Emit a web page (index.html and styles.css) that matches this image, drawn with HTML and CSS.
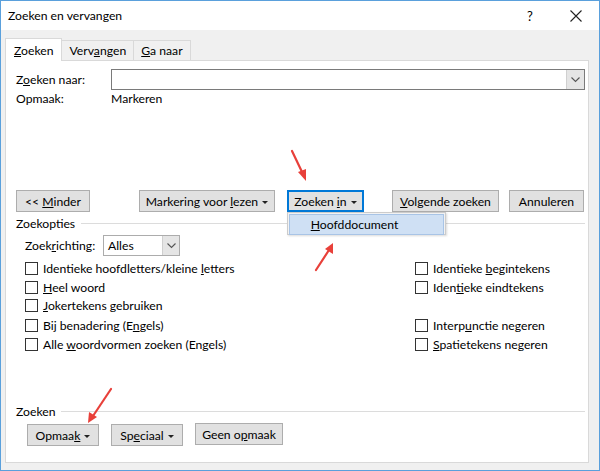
FILE: index.html
```html
<!DOCTYPE html>
<html lang="nl">
<head>
  <meta charset="UTF-8" />
  <title>Zoeken en vervangen</title>
  <link rel="stylesheet" href="styles.css">
</head>
<body>

  <div class="window">
    <div class="titlebar">
      <span class="title">Zoeken en vervangen</span>
      <span class="help">?</span>
      <span class="close">
        <svg width="12" height="12" viewBox="0 0 12 12"><path d="M0.5 0.5 L11.5 11.5 M11.5 0.5 L0.5 11.5" stroke="#222" stroke-width="1.1" fill="none"/></svg>
      </span>
    </div>

    <div class="client">
      <div class="tabs">
        <div class="tab active"><u>Z</u>oeken</div>
        <div class="tab">Verv<u>a</u>ngen</div>
        <div class="tab"><u>G</u>a naar</div>
      </div>

      <div class="panel">
        <div class="search-row">
          <span class="lbl">Z<u>o</u>eken naar:</span>
          <div class="combo">
            <div class="combo-btn">
              <svg width="9" height="6" viewBox="0 0 9 6"><path d="M0.5 0.5 L4.5 4.5 L8.5 0.5" stroke="#555" stroke-width="1.1" fill="none"/></svg>
            </div>
          </div>
        </div>
        <div class="format-row">
          <span class="lbl">Opmaak:</span>
          <span>Markeren</span>
        </div>

        <div class="actions">
          <button class="btn minder">&lt;&lt; <u>M</u>inder</button>
          <button class="btn reading">Markering voor <u>l</u>ezen <span class="caret"></span></button>
          <div class="menu-wrap">
            <button class="btn default">Zoeken <u>i</u>n <span class="caret"></span></button>
            <div class="menu"><div class="menu-item"><u>H</u>oofddocument</div></div>
          </div>
          <button class="btn next"><u>V</u>olgende zoeken</button>
          <button class="btn cancel">Annuleren</button>
        </div>

        <div class="group-title"><span>Zoekopties</span></div>

        <div class="direction-row">
          <span class="lbl">Zoek<u>r</u>ichting:</span>
          <div class="select">
            <span>Alles</span>
            <div class="select-btn">
              <svg width="9" height="6" viewBox="0 0 9 6"><path d="M0.5 0.5 L4.5 4.5 L8.5 0.5" stroke="#555" stroke-width="1.1" fill="none"/></svg>
            </div>
          </div>
        </div>

        <div class="options">
          <div class="col">
            <label class="check"><span class="box"></span><span>Identieke hoofdletters/kleine <u>l</u>etters</span></label>
            <label class="check"><span class="box"></span><span><u>H</u>eel woord</span></label>
            <label class="check"><span class="box"></span><span><u>J</u>okertekens gebruiken</span></label>
            <label class="check"><span class="box"></span><span>Bij benadering (E<u>n</u>gels)</span></label>
            <label class="check"><span class="box"></span><span>Alle <u>w</u>oordvormen zoeken (Engels)</span></label>
          </div>
          <div class="col right">
            <label class="check"><span class="box"></span><span>Identieke <u>b</u>egintekens</span></label>
            <label class="check"><span class="box"></span><span>Iden<u>t</u>ieke eindtekens</span></label>
            <label class="check blank"></label>
            <label class="check"><span class="box"></span><span>Interp<u>u</u>nctie negeren</span></label>
            <label class="check"><span class="box"></span><span><u>S</u>patietekens negeren</span></label>
          </div>
        </div>

        <div class="group-title bottom"><span>Zoeken</span></div>

        <div class="format-buttons">
          <button class="btn small">Opmaa<u>k</u> <span class="caret"></span></button>
          <button class="btn small">Sp<u>e</u>ciaal <span class="caret"></span></button>
          <button class="btn plain">Geen o<u>p</u>maak</button>
        </div>
      </div>
    </div>

    <!-- red annotation arrows -->
    <svg class="arrows" width="600" height="471" viewBox="0 0 600 471">
      <g stroke="#e8403a" stroke-width="2.2" fill="none" stroke-linecap="round">
        <path d="M292 151 L303 174"/>
        <path d="M316 270 L329 250"/>
        <path d="M111 389 L93 416"/>
      </g>
      <g fill="#e8403a">
        <path d="M306 181 L298 172 L306 169 Z"/>
        <path d="M333 243 L333 254 L325 249 Z"/>
        <path d="M88 423 L89 412 L97 417 Z"/>
      </g>
    </svg>
  </div>

</body>
</html>
```

FILE: styles.css
```css
body {
  margin: 0;
  padding: 0;
  font-family: "Segoe UI", Lato, "Noto Sans", sans-serif;
  font-size: 12.2px;
  color: #000;
}
u {
  text-decoration: underline;
  text-underline-offset: 1px;
}
.window {
  position: relative;
  width: 600px;
  height: 471px;
  box-sizing: border-box;
  border: 1px solid #5aa0dc;
  background: #f0f0f0;
  overflow: hidden;
}
.titlebar {
  height: 29px;
  background: #fff;
  display: flex;
  align-items: center;
  padding-left: 7px;
}
.title {
  flex: 1;
}
.help {
  width: 46px;
  text-align: center;
  font-size: 13px;
}
.close {
  width: 46px;
  display: flex;
  justify-content: center;
}
.client {
  padding: 8px 10px 0 4px;
}
.tabs {
  display: flex;
  height: 22px;
  align-items: flex-end;
  position: relative;
  z-index: 2;
}
.tab {
  height: 19px;
  line-height: 19px;
  padding: 0 7px;
  border: 1px solid #d9d9d9;
  border-bottom: none;
  margin-left: -1px;
  background: #f0f0f0;
}
.tab:first-child {
  margin-left: 0;
}
.tab.active {
  height: 22px;
  line-height: 23px;
  background: #fff;
  padding: 0 8px;
  margin-bottom: -1px;
}
.panel {
  background: #fff;
  border: 1px solid #d9d9d9;
  height: 401px;
  padding: 0 3px 0 10px;
  position: relative;
}
.search-row {
  display: flex;
  align-items: center;
  margin-top: 8px;
  height: 21px;
}
.search-row .lbl,
.format-row .lbl {
  width: 95px;
}
.combo {
  flex: 1;
  height: 19px;
  border: 1px solid #7a7a7a;
  display: flex;
  justify-content: flex-end;
}
.combo-btn {
  width: 17px;
  background: #e5e5e5;
  border-left: 1px solid #d0d0d0;
  display: flex;
  align-items: center;
  justify-content: center;
}
.format-row {
  display: flex;
  margin-top: 1px;
  height: 17px;
}
.actions {
  display: flex;
  margin-top: 82px;
  height: 22px;
  align-items: flex-start;
}
.btn {
  font-family: inherit;
  font-size: inherit;
  color: #000;
  background: #e1e1e1;
  border: 1px solid #adadad;
  height: 22px;
  padding: 0;
  margin: 0;
  white-space: nowrap;
}
.caret {
  display: inline-block;
  width: 0;
  height: 0;
  border-left: 3px solid transparent;
  border-right: 3px solid transparent;
  border-top: 3px solid #222;
  vertical-align: middle;
  margin-left: 1px;
}
.minder {
  width: 74px;
}
.reading {
  width: 136px;
  margin-left: 49px;
}
.menu-wrap {
  position: relative;
  margin-left: 12px;
}
.btn.default {
  width: 77px;
  border: 2px solid #0078d7;
}
.menu {
  position: absolute;
  top: 22px;
  left: 0;
  width: 159px;
  height: 23px;
  background: #f2f2f2;
  border: 1px solid #ccc;
  box-sizing: border-box;
  padding: 1px;
  box-shadow: 1px 1px 2px rgba(0, 0, 0, 0.15);
  z-index: 3;
}
.menu-item {
  height: 19px;
  line-height: 19px;
  background: #cfe0f4;
  border: 1px solid #a8c4e6;
  text-align: center;
  padding-right: 24px;
}
.next {
  width: 107px;
  margin-left: 28px;
}
.cancel {
  width: 75px;
  margin-left: 10px;
}
.group-title {
  display: flex;
  align-items: center;
  margin-top: 3px;
  height: 16px;
}
.group-title::after {
  content: "";
  flex: 1;
  height: 1px;
  background: #dcdcdc;
  margin-left: 6px;
}
.direction-row {
  display: flex;
  align-items: center;
  margin-top: 4px;
  margin-left: 9px;
  height: 21px;
}
.direction-row .lbl {
  width: 78px;
}
.select {
  width: 77px;
  border: 1px solid #acacac;
  display: flex;
  align-items: center;
  padding-left: 4px;
  box-sizing: border-box;
  height: 21px;
}
.select span {
  flex: 1;
}
.select-btn {
  width: 16px;
  height: 19px;
  background: #e5e5e5;
  border-left: 1px solid #cfcfcf;
  display: flex;
  align-items: center;
  justify-content: center;
}
.options {
  display: flex;
  margin-left: 9px;
  margin-top: 3px;
}
.col {
  display: flex;
  flex-direction: column;
  width: 390px;
}
.col.right {
  width: auto;
}
.check {
  display: flex;
  align-items: center;
  height: 18.7px;
  white-space: nowrap;
}
.check:nth-child(4) {
  margin-top: 1px;
}
.box {
  width: 11px;
  height: 11px;
  border: 1px solid #333;
  margin-right: 5px;
  background: #fff;
}
.group-title.bottom {
  margin-top: 50px;
}
.format-buttons {
  display: flex;
  margin-top: 5px;
  margin-left: 11px;
}
.btn.small {
  width: 72px;
  margin-right: 12px;
}
.btn.plain {
  width: 88px;
  margin-top: -1px;
}
.arrows {
  position: absolute;
  left: -1px;
  top: -1px;
  pointer-events: none;
  z-index: 5;
}
```
